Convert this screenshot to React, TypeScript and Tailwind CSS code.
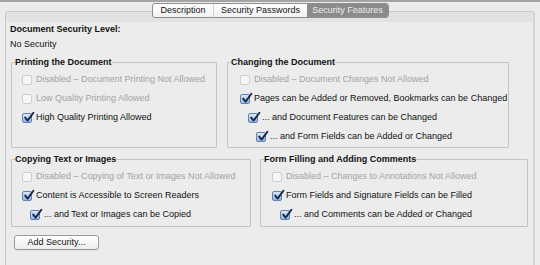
import React from "react";

const Check = ({ checked, disabled }: { checked?: boolean; disabled?: boolean }) => {
  if (checked) {
    return (
      <span className="relative inline-block w-[10px] h-[10px] shrink-0 rounded-[2px] border border-[#5f7fae] bg-gradient-to-b from-[#dbe9f8] to-[#93b9e4]">
        <svg className="absolute left-[0px] top-[-3px]" width="12" height="12" viewBox="0 0 12 12">
          <path d="M2.2 6.6 L4.6 9.6 L10.4 1.8" fill="none" stroke="#1b2547" strokeWidth="1.9" strokeLinecap="round" strokeLinejoin="round" />
        </svg>
      </span>
    );
  }
  return (
    <span
      className={
        "inline-block w-[10px] h-[10px] shrink-0 rounded-[2px] border " +
        (disabled ? "border-[#cdcdcd] bg-[#f7f7f7]" : "border-[#9a9a9a] bg-white")
      }
    />
  );
};

type RowProps = { text: string; checked?: boolean; disabled?: boolean; indent?: number };

const Row = ({ text, checked, disabled, indent = 0 }: RowProps) => (
  <div
    className={
      "flex items-center h-[19px] gap-[4px] whitespace-nowrap " +
      (indent === 1 ? "pl-[8px] " : indent === 2 ? "pl-[16px] " : "") +
      (disabled ? "text-[#a3a3a3]" : "text-[#111]")
    }
  >
    <Check checked={checked} disabled={disabled} />
    <span>{text}</span>
  </div>
);

const Group = ({
  title,
  className,
  pad,
  children,
}: {
  title: string;
  className: string;
  pad: string;
  children: React.ReactNode;
}) => (
  <fieldset className={"border border-[#c3c3c3] rounded-[1px] " + className}>
    <legend className="ml-[3px] font-bold leading-[15px] text-[#111]">{title}</legend>
    <div className={pad}>{children}</div>
  </fieldset>
);

export default function App() {
  return (
    <div
      className="w-[540px] h-[265px] overflow-hidden bg-[#ececec] text-[9px]"
      style={{ fontFamily: '"Liberation Sans", Arial, sans-serif' }}
    >
      <div className="h-[2px] bg-[#a4a4a4]" />
      <div className="relative pt-[9px]">
        <div className="ml-[5px] w-[530px] h-[260px] border border-b-0 border-[#c8c8c8] border-r-[2px] border-r-[#d4d4d4] rounded-t-[3px]">
          <div className="h-[10px] bg-[#e2e2e2]" />
          <div className="pl-[4px]">
            <div className="leading-[15px] font-bold text-[#111]">Document Security Level:</div>
            <div className="leading-[15px] text-[#111]">No Security</div>
            <div className="flex gap-[10px] ml-[1px] mt-[3px]">
              <Group title="Printing the Document" className="w-[206px] pb-[1px]" pad="pl-[10px]">
                <Row text="Disabled – Document Printing Not Allowed" disabled />
                <Row text="Low Quality Printing Allowed" disabled />
                <Row text="High Quality Printing Allowed" checked />
              </Group>
              <Group title="Changing the Document" className="w-[282px] pb-[1px]" pad="pl-[12px]">
                <Row text="Disabled – Document Changes Not Allowed" disabled />
                <Row text="Pages can be Added or Removed, Bookmarks can be Changed" checked />
                <Row text="... and Document Features can be Changed" checked indent={1} />
                <Row text="... and Form Fields can be Added or Changed" checked indent={2} />
              </Group>
            </div>
            <div className="flex gap-[9px] ml-[1px] mt-[4px]">
              <Group title="Copying Text or Images" className="w-[240px] pb-[2px]" pad="pl-[10px]">
                <Row text="Disabled – Copying of Text or Images Not Allowed" disabled />
                <Row text="Content is Accessible to Screen Readers" checked />
                <Row text="... and Text or Images can be Copied" checked indent={1} />
              </Group>
              <Group title="Form Filling and Adding Comments" className="w-[268px] pb-[2px]" pad="pl-[11px]">
                <Row text="Disabled – Changes to Annotations Not Allowed" disabled />
                <Row text="Form Fields and Signature Fields can be Filled" checked />
                <Row text="... and Comments can be Added or Changed" checked indent={1} />
              </Group>
            </div>
            <button className="mt-[8px] ml-[4px] w-[85px] h-[15px] rounded-[3px] border border-[#9b9b9b] bg-gradient-to-b from-white to-[#ededed] text-[#111] leading-[13px] shadow-[0_1px_0_rgba(0,0,0,0.05)]">
              Add Security...
            </button>
          </div>
        </div>
        <div className="absolute top-[1px] left-[152px] flex h-[15px] rounded-[3px] border border-[#8e8e8e] overflow-hidden bg-gradient-to-b from-white to-[#f1f1f1] leading-[13px]">
          <div className="w-[61px] flex items-center justify-center text-[#111] border-r border-[#d0d0d0]">Description</div>
          <div className="w-[93px] flex items-center justify-center text-[#111]">Security Passwords</div>
          <div className="w-[81px] flex items-center justify-center bg-[#8b8b8b] text-[#ececec]">Security Features</div>
        </div>
      </div>
    </div>
  );
}
